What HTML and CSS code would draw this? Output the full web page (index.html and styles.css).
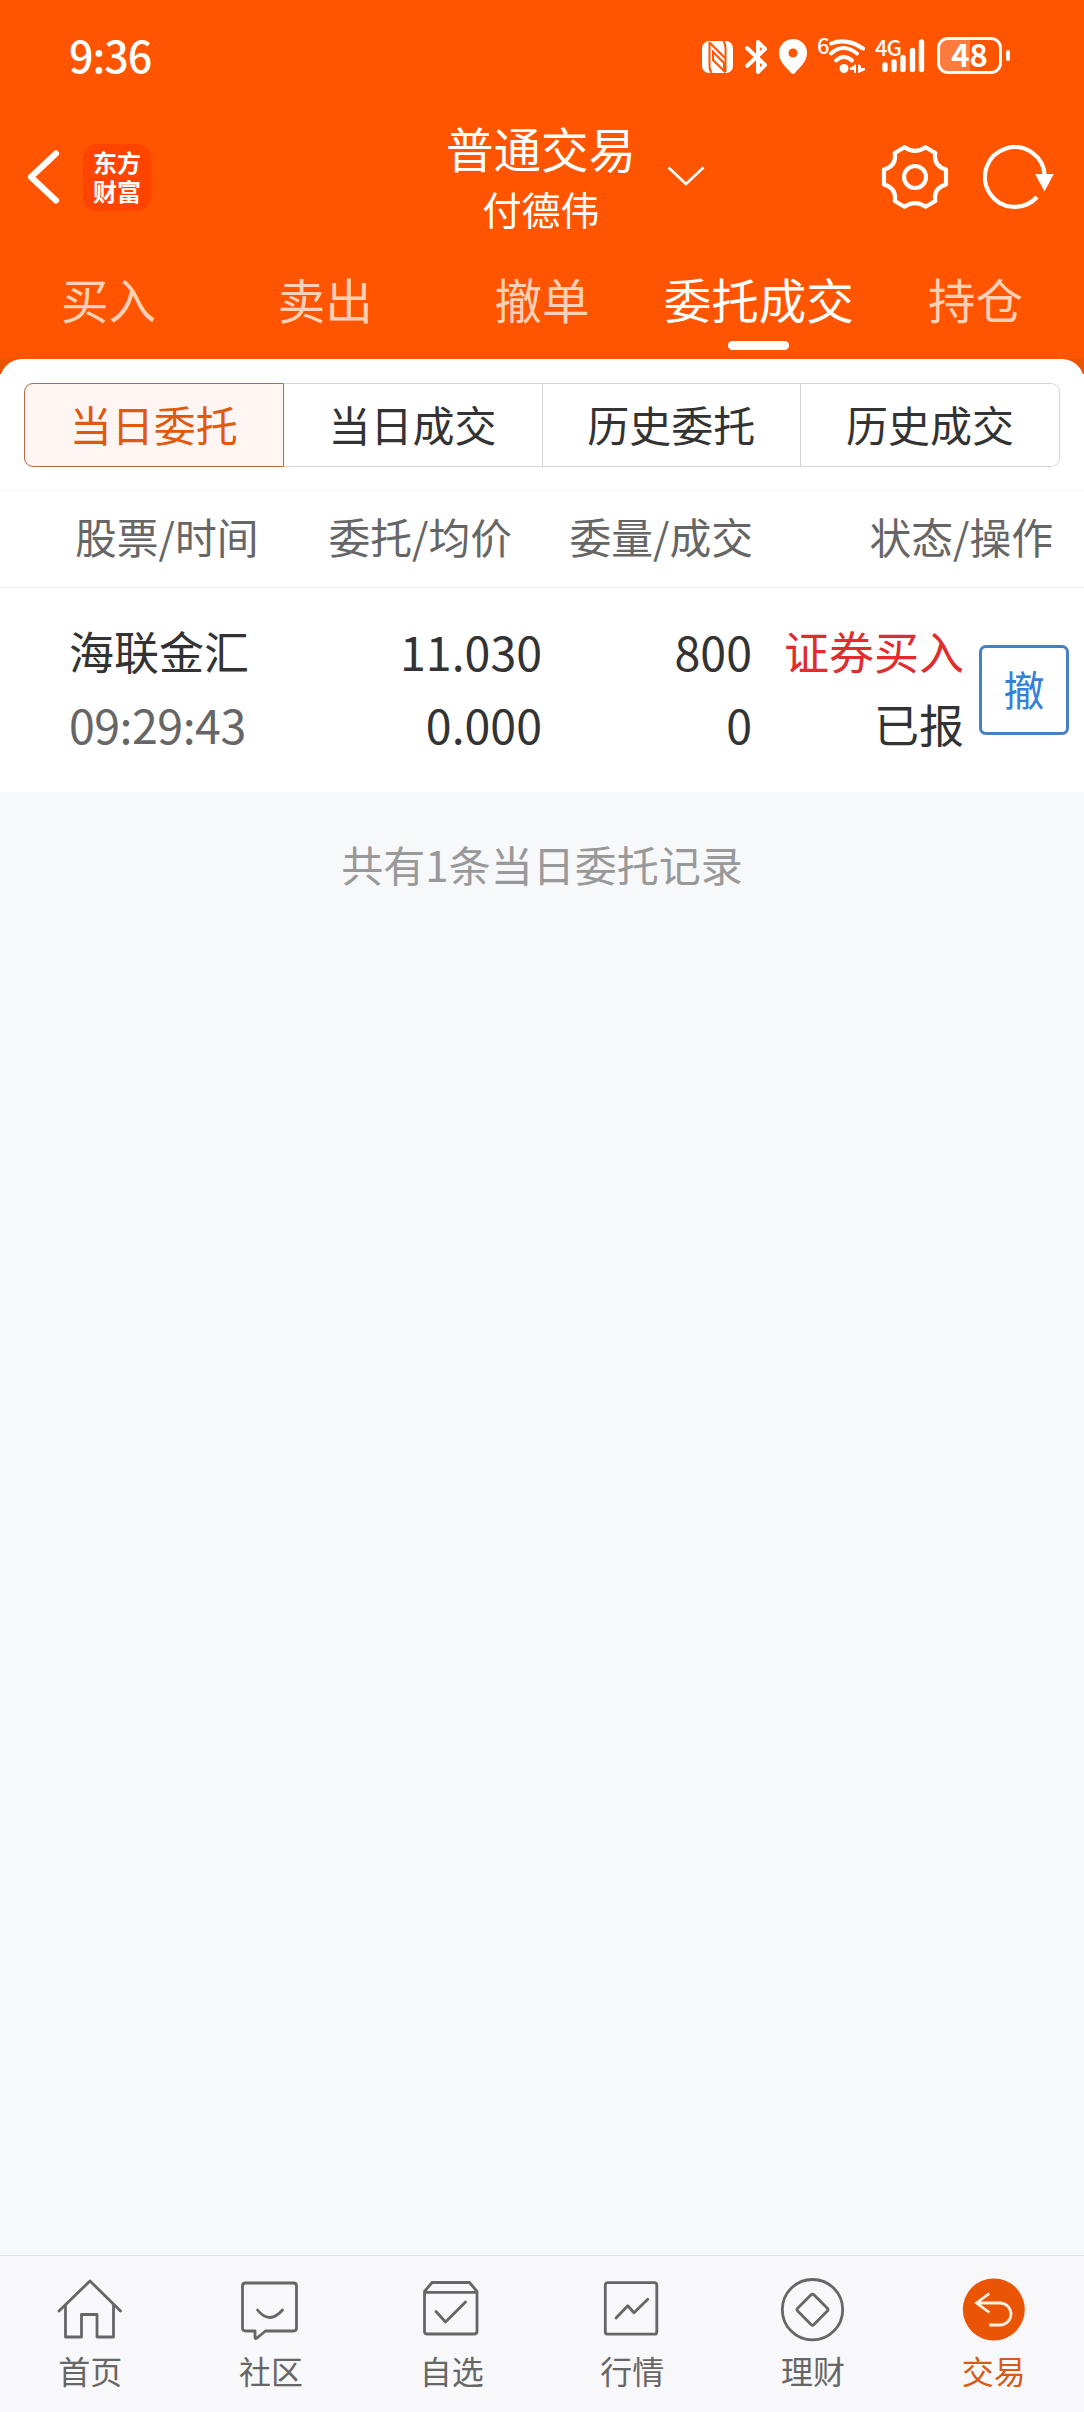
FILE: index.html
```html
<!DOCTYPE html>
<html lang="zh-CN">
<head>
    <meta charset="UTF-8">
    <meta name="viewport" content="width=device-width, initial-scale=1.0">
    <title>普通交易</title>
    <link rel="stylesheet" href="styles.css">
</head>
<body>
    <header class="header">
        <div class="status-bar">
            <span class="time">9:36</span>
            <div class="status-icons">
                <svg class="nfc" width="31" height="32" viewBox="0 0 31 32">
                    <rect width="31" height="32" rx="7" fill="#fff"/>
                    <path d="M7.500 1v24q0 4 2 7M23.500 31V7q0-4-2-7" fill="none" stroke="#ff5500" stroke-width="2"/>
                    <path d="M8 2l15 15M11 11l11 11v8L11 19z" fill="none" stroke="#ff5500" stroke-width="2"/>
                </svg>
                <svg class="bluetooth" width="23" height="36" viewBox="0 0 23 36">
                    <path d="M2 9l18 17-7 7V3l7 7L2 27" fill="none" stroke="#fff" stroke-width="4" stroke-linejoin="round" stroke-linecap="round"/>
                </svg>
                <svg class="pin" width="28" height="35" viewBox="0 0 28 35">
                    <path fill-rule="evenodd" d="M14 0a14 14 0 0 1 14 14c0 9-8 15-12 20q-2 2-4 0C8 29 0 23 0 14A14 14 0 0 1 14 0zm0 9.500a4.500 4.500 0 1 0 0 9 4.500 4.500 0 0 0 0-9z" fill="#fff"/>
                </svg>
                <span class="wifi-gen">6</span>
                <svg class="wifi" width="38" height="36" viewBox="0 0 38 36">
                    <g fill="none" stroke="#fff" stroke-width="4" stroke-linecap="round">
                        <path d="M3 5.500q16-6 32 5"/>
                        <path d="M3 15.500q12-11 26 0"/>
                        <path d="M8 22.500q8-7 16 0"/>
                    </g>
                    <circle cx="16" cy="30.500" r="4.500" fill="#fff"/>
                    <path d="M28 26v9h-2v-3h-4v-2zM30 26l3 2v2h4v2l-4 2-3 1z" fill="#fff"/>
                </svg>
                <div class="signal">
                    <span class="signal-type">4G</span>
                    <svg width="43" height="35" viewBox="0 0 43 35">
                        <g stroke="#fff" stroke-width="5.400" stroke-linecap="round">
                            <path d="M3 26v4.500M12 23v7.500M21 18.500v12M30.500 11.500v19M39.500 3v27.500"/>
                        </g>
                    </svg>
                </div>
                <div class="battery"><span>48</span></div>
                <i class="battery-cap"></i>
            </div>
        </div>

        <div class="nav">
            <div class="nav-left">
                <svg width="33" height="54" viewBox="0 0 33 54">
                    <path d="M29 3.500L4 27l25 23.500" fill="none" stroke="#fff" stroke-width="6.200" stroke-linecap="round" stroke-linejoin="round"/>
                </svg>
                <div class="logo">东方<br>财富</div>
            </div>
            <div class="nav-title">
                <h1>普通交易</h1>
                <p>付德伟</p>
                <svg class="arrow" width="38" height="20" viewBox="0 0 38 20">
                    <path d="M1.500 1.500L19 18 36.500 1.500" fill="none" stroke="#fff" stroke-width="2.600"/>
                </svg>
            </div>
            <div class="nav-right">
                <svg width="68" height="64" viewBox="-34 -32 68 64" fill="none" stroke="#fff" stroke-width="4.200" stroke-linejoin="round">
                    <path d="M-10.500-29.800Q0-22.500 10.500-29.800L20.300-24Q18-11.500 31-7.500L31 7.500Q18 11.500 20.300 24L10.500 29.800Q0 22.500-10.500 29.800L-20.300 24Q-18 11.500-31 7.500L-31-7.500Q-18-11.500-20.300-24Z"/>
                    <circle r="11"/>
                </svg>
                <svg width="72" height="64" viewBox="0 0 72 64">
                    <path d="M61.700 31A29.900 29.900 0 1 0 54 52" fill="none" stroke="#fff" stroke-width="4.200"/>
                    <path d="M52 29h18.700L61.500 46.500z" fill="#fff"/>
                </svg>
            </div>
        </div>

        <nav class="tabs">
            <a>买入</a>
            <a>卖出</a>
            <a>撤单</a>
            <a class="active">委托成交</a>
            <a>持仓</a>
        </nav>
        <div class="header-edge"></div>
    </header>

    <main class="panel">
        <div class="segments">
            <span class="active">当日委托</span>
            <span>当日成交</span>
            <span>历史委托</span>
            <span>历史成交</span>
        </div>
        <div class="list-head">
            <span>股票/时间</span>
            <span>委托/均价</span>
            <span>委量/成交</span>
            <span>状态/操作</span>
        </div>
        <div class="order">
            <div class="cell stock">
                <span>海联金汇</span>
                <span class="num gray">09:29:43</span>
            </div>
            <div class="cell num">
                <span>11.030</span>
                <span>0.000</span>
            </div>
            <div class="cell num">
                <span>800</span>
                <span>0</span>
            </div>
            <div class="cell">
                <span class="red">证券买入</span>
                <span>已报</span>
            </div>
            <button class="cancel">撤</button>
        </div>
    </main>

    <p class="total">共有1条当日委托记录</p>

    <footer class="tabbar">
        <a>
            <svg width="66" height="66" viewBox="0 0 66 66">
                <path d="M2 34L33 4l30.500 30M8.500 28v32h16V37.500h15.500V60h16.500V28"/>
            </svg>
            首页
        </a>
        <a>
            <svg width="66" height="66" viewBox="0 0 66 66">
                <path d="M7.500 6h48q3 0 3 3v42q0 3-3 3h-28l-8.500 7q-2 1.500-2-1v-6H7.500q-3 0-3-3V9q0-3 3-3z"/>
                <path d="M19.500 33q12 15 25 0"/>
            </svg>
            社区
        </a>
        <a>
            <svg width="66" height="66" viewBox="0 0 66 66">
                <path d="M5.500 14.500l7.500-9h37.500l7.500 9v40q0 2.500-3 2.500H8.500q-3 0-3-2.500zM6 15.300h51M17 34.500L26.500 45l20-20"/>
            </svg>
            自选
        </a>
        <a>
            <svg width="66" height="66" viewBox="0 0 66 66">
                <rect x="6.300" y="5.700" width="51.500" height="51.500" rx="2.500"/>
                <path d="M17 41l11.800-12.300 6.200 7L48.800 22.300"/>
            </svg>
            行情
        </a>
        <a>
            <svg width="66" height="66" viewBox="0 0 66 66">
                <circle cx="32.500" cy="32.700" r="30.200"/>
                <rect x="21" y="21.200" width="23" height="23" rx="2" transform="rotate(45 32.500 32.700)"/>
            </svg>
            理财
        </a>
        <a class="active">
            <svg width="66" height="66" viewBox="0 0 66 66">
                <circle class="disc" cx="32.800" cy="32.500" r="31"/>
                <path d="M28.300 16.500L15.500 26l12.800 9.500M15.500 26H39a11 11 0 0 1 0 22H28.300"/>
            </svg>
            交易
        </a>
    </footer>
</body>
</html>
```
FILE: styles.css
```css
* {
    box-sizing: border-box;
    margin: 0;
    padding: 0;
}

body {
    display: flex;
    flex-direction: column;
    width: 1084px;
    height: 2412px;
    background-color: #f7f8fa;
    color: #333;
    font-family: "Noto Sans CJK SC", sans-serif;
}

svg {
    display: block;
    flex: none;
}

.header {
    background-color: #ff5500;
    color: #fff;
}

/* status bar */
.status-bar {
    display: flex;
    justify-content: space-between;
    height: 105px;
    padding: 37px 74px 0 69px;
}

.time {
    margin-top: -3px;
    font-size: 43px;
    font-weight: 500;
    line-height: 40px;
    letter-spacing: -1px;
}

.status-icons {
    display: flex;
    align-items: flex-start;
    height: 38px;
}

.nfc {
    margin: 4px 12px 0 -1px;
}

.bluetooth {
    margin: 2px 11px 0 0;
}

.pin {
    margin: 2px 10px 0 0;
}

.wifi-gen {
    width: 12px;
    font-size: 22px;
    font-weight: 500;
    line-height: 15px;
}

.wifi {
    margin: 1px 9px 0 -1px;
}

.signal {
    position: relative;
    width: 51px;
    padding: 2px 0 0 7px;
    margin-right: 11px;
}

.signal-type {
    position: absolute;
    left: 0;
    top: 0;
    font-size: 22px;
    font-weight: 500;
    line-height: 18px;
    letter-spacing: -1px;
}

.battery {
    width: 65px;
    height: 37px;
    border: 3px solid #fff;
    border-radius: 11px;
    background: linear-gradient(90deg, #ff7a3c 50%, transparent 50%);
    font-size: 31px;
    font-weight: 700;
    line-height: 28px;
    text-align: center;
}

.battery-cap {
    width: 4px;
    height: 11px;
    margin: 13px 0 0 4px;
    border-radius: 2px;
    background-color: #fff;
}

/* title row */
.nav {
    display: grid;
    grid-template-columns: 1fr auto 1fr;
    align-items: center;
    height: 144px;
    padding: 0 29px 0 27px;
}

.nav-left,
.nav-right {
    display: flex;
    align-items: center;
}

.nav-left {
    gap: 23px;
}

.nav-right {
    justify-content: flex-end;
    gap: 34px;
}

.logo {
    width: 68px;
    height: 67px;
    padding-top: 3px;
    border-radius: 14px;
    background-color: #ff4400;
    font-size: 24px;
    font-weight: 700;
    line-height: 29px;
    text-align: center;
}

.nav-title {
    position: relative;
    padding-top: 2px;
    text-align: center;
}

.nav-title h1 {
    font-size: 47.5px;
    font-weight: 400;
    line-height: 60px;
}

.nav-title p {
    font-size: 39px;
    line-height: 60px;
}

.arrow {
    position: absolute;
    left: 221px;
    top: 50px;
}

/* main tabs */
.tabs {
    display: flex;
    height: 110px;
}

.tabs a {
    display: flex;
    flex: 1;
    flex-direction: column;
    align-items: center;
    padding-top: 14px;
    color: #ffd0b5;
    font-size: 47.5px;
    line-height: 72px;
    white-space: nowrap;
}

.tabs .active {
    color: #fff;
}

.tabs .active::after {
    content: "";
    width: 61px;
    height: 9px;
    margin-top: 6px;
    border-radius: 5px;
    background-color: #fff;
}

.header-edge {
    height: 15px;
    background-color: #e85504;
}

/* orders */
.panel {
    margin-top: -15px;
    padding-top: 24px;
    border-radius: 22px 22px 0 0;
    background-color: #fff;
}

.segments {
    display: flex;
    height: 84px;
    margin: 0 24px 23px;
}

.segments span {
    flex: 1;
    border: 1px solid #d3d6d9;
    border-left: 0;
    font-size: 42px;
    line-height: 80px;
    text-align: center;
}

.segments .active {
    border: 1px solid #b9683f;
    border-radius: 9px 0 0 9px;
    background-color: #fff6f3;
    color: #dd5a10;
}

.segments span:last-child {
    border-radius: 0 9px 9px 0;
}

.list-head {
    display: grid;
    grid-template-columns: 180px 257px 241px 300px;
    height: 98px;
    padding-left: 75px;
    border-top: 1px solid #f6f6f7;
    border-bottom: 1px solid #eceded;
    color: #666;
    font-size: 41.8px;
    line-height: 91px;
    text-align: right;
    white-space: nowrap;
}

.order {
    display: grid;
    grid-template-columns: 200px 273px 210px 212px 90px;
    height: 204px;
    padding: 26px 15px 0 69px;
    font-size: 45px;
    line-height: 73px;
    text-align: right;
}

.cell {
    display: flex;
    flex-direction: column;
    white-space: nowrap;
}

.stock {
    text-align: left;
}

.num {
    font-size: 46.5px;
}

.stock .num {
    letter-spacing: -0.5px;
}

.gray {
    color: #666;
}

.red {
    color: #df2c2c;
}

.cancel {
    width: 90px;
    height: 90px;
    margin: 31px 0 0 15px;
    padding-bottom: 4px;
    border: 3px solid #447fc8;
    border-radius: 7px;
    background-color: #fff;
    color: #367fd9;
    font-family: inherit;
    font-size: 41px;
}

.total {
    margin-top: 40px;
    color: #999;
    font-size: 42px;
    line-height: 64px;
    text-align: center;
}

/* bottom bar */
.tabbar {
    display: flex;
    height: 157px;
    margin-top: auto;
    border-top: 1px solid #dde1e3;
    background-color: #f8f8fa;
}

.tabbar a {
    display: flex;
    flex: 1;
    flex-direction: column;
    align-items: center;
    padding-top: 21px;
    color: #666;
    font-size: 32px;
    line-height: 54px;
}

.tabbar svg {
    fill: none;
    stroke: #666;
    stroke-width: 2.8;
    stroke-linecap: round;
    stroke-linejoin: round;
}

.tabbar .active {
    color: #d65a1a;
}

.tabbar .active svg {
    stroke: #fff0e2;
    stroke-linecap: butt;
    stroke-linejoin: miter;
}

.tabbar .disc {
    fill: #e95504;
    stroke: none;
}
```
